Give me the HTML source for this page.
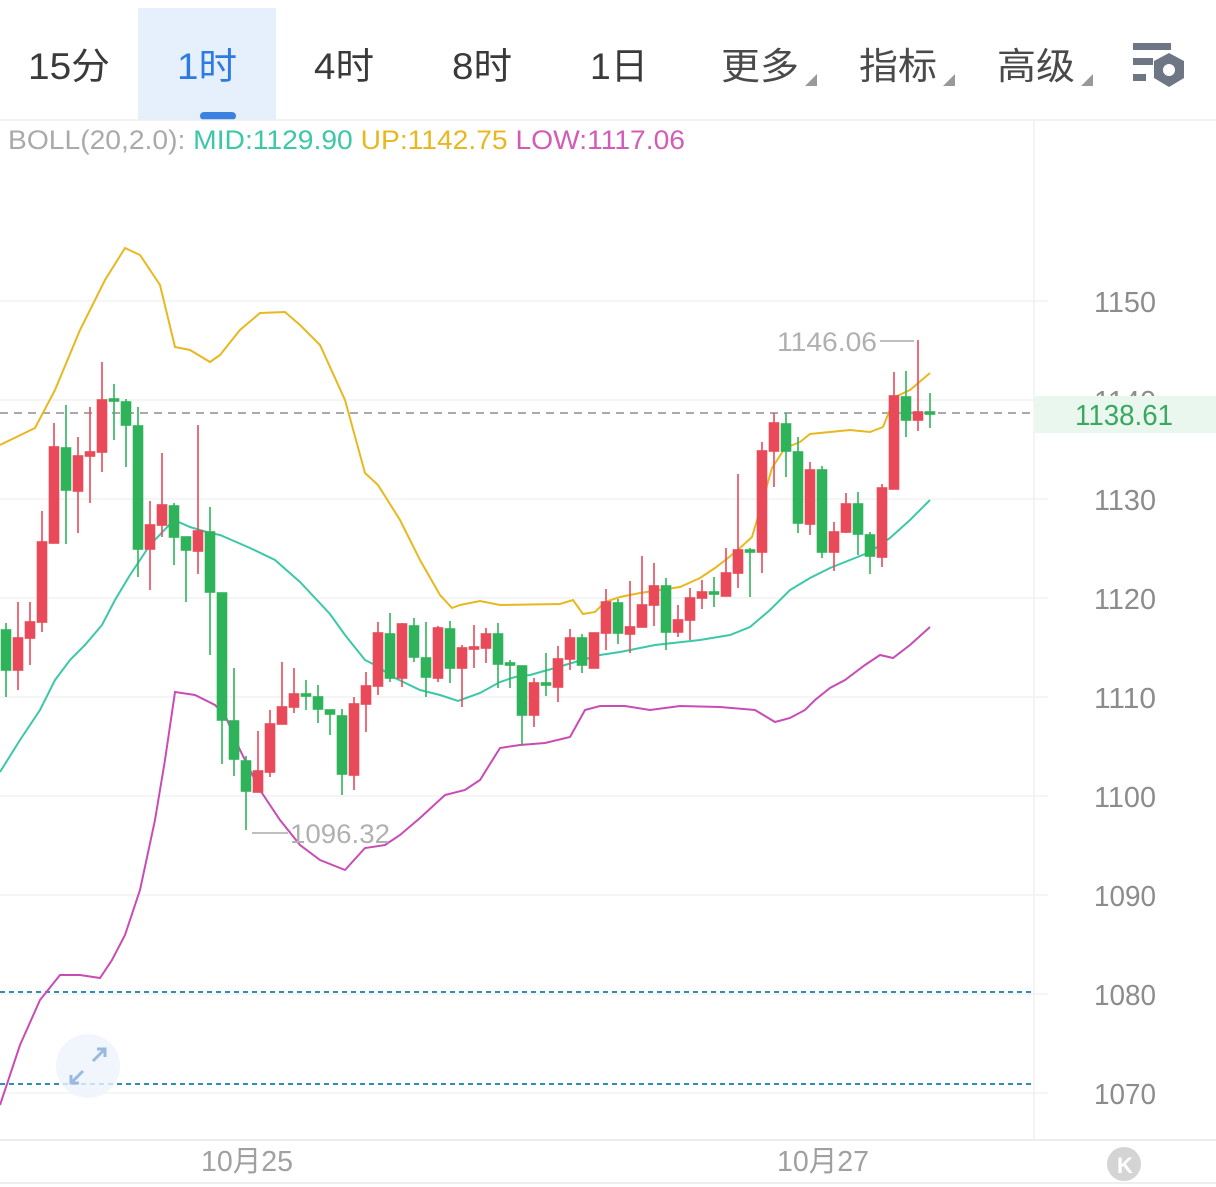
<!DOCTYPE html>
<html><head><meta charset="utf-8"><style>
html,body{margin:0;padding:0;background:#fff;width:1216px;height:1187px;overflow:hidden}
svg{display:block}
text{font-family:"Liberation Sans","Noto Sans CJK SC",sans-serif}
</style></head><body>
<svg width="1216" height="1187" viewBox="0 0 1216 1187" xmlns="http://www.w3.org/2000/svg">
<rect width="1216" height="1187" fill="#fff"/>
<rect x="138" y="8" width="138" height="112" fill="#e6f0fc"/>
<rect x="200" y="112" width="36" height="8" rx="4" fill="#3b82e0"/>
<g font-size="37" fill="#3a3a3a">
<text x="28" y="79" textLength="82" lengthAdjust="spacingAndGlyphs">15分</text>
<text x="177" y="79" textLength="60" lengthAdjust="spacingAndGlyphs" fill="#2d7be0">1时</text>
<text x="314" y="79" textLength="60" lengthAdjust="spacingAndGlyphs">4时</text>
<text x="452" y="79" textLength="60" lengthAdjust="spacingAndGlyphs">8时</text>
<text x="590" y="79" textLength="58" lengthAdjust="spacingAndGlyphs">1日</text>
<text x="721" y="79" textLength="78" lengthAdjust="spacingAndGlyphs" fill="#4a4a4a">更多</text>
<text x="859" y="79" textLength="78" lengthAdjust="spacingAndGlyphs" fill="#4a4a4a">指标</text>
<text x="997" y="79" textLength="78" lengthAdjust="spacingAndGlyphs" fill="#4a4a4a">高级</text>
</g>
<g fill="#999">
<polygon points="817,74 817,86 805,86"/>
<polygon points="955,74 955,86 943,86"/>
<polygon points="1093,74 1093,86 1081,86"/>
</g>
<g fill="#6e7585">
<rect x="1133" y="43" width="38" height="7"/>
<rect x="1133" y="58" width="20" height="7"/>
<rect x="1133" y="74" width="13" height="7"/>
<polygon points="1169,53 1184,61 1184,78 1169,87 1154,78 1154,61"/>
</g>
<circle cx="1169" cy="70" r="6" fill="#fff"/>
<line x1="0" y1="120" x2="1216" y2="120" stroke="#eee" stroke-width="1.5"/>
<line x1="1034" y1="120" x2="1034" y2="1140" stroke="#f0f0f0" stroke-width="1.5"/>
<text x="8" y="149" font-size="27" textLength="677" lengthAdjust="spacingAndGlyphs"><tspan fill="#aaa">BOLL(20,2.0): </tspan><tspan fill="#3cc8a8">MID:1129.90 </tspan><tspan fill="#e8b820">UP:1142.75 </tspan><tspan fill="#d35cb8">LOW:1117.06</tspan></text>
<g stroke="#f2f2f2" stroke-width="1.5">
<line x1="0" y1="301" x2="1048" y2="301"/><line x1="0" y1="400" x2="1048" y2="400"/>
<line x1="0" y1="499" x2="1048" y2="499"/><line x1="0" y1="598" x2="1048" y2="598"/>
<line x1="0" y1="697" x2="1048" y2="697"/><line x1="0" y1="796" x2="1048" y2="796"/>
<line x1="0" y1="895" x2="1048" y2="895"/><line x1="0" y1="994" x2="1048" y2="994"/>
<line x1="0" y1="1093" x2="1048" y2="1093"/>
</g>
<line x1="0" y1="1140" x2="1216" y2="1140" stroke="#eee" stroke-width="2"/>
<line x1="0" y1="1183" x2="1216" y2="1183" stroke="#eee" stroke-width="2"/>
<g font-size="29" fill="#8c8c8c">
<text x="1094" y="312" textLength="62" lengthAdjust="spacingAndGlyphs">1150</text>
<text x="1094" y="411" textLength="62" lengthAdjust="spacingAndGlyphs">1140</text>
<text x="1094" y="510" textLength="62" lengthAdjust="spacingAndGlyphs">1130</text>
<text x="1094" y="609" textLength="62" lengthAdjust="spacingAndGlyphs">1120</text>
<text x="1094" y="708" textLength="62" lengthAdjust="spacingAndGlyphs">1110</text>
<text x="1094" y="807" textLength="62" lengthAdjust="spacingAndGlyphs">1100</text>
<text x="1094" y="906" textLength="62" lengthAdjust="spacingAndGlyphs">1090</text>
<text x="1094" y="1005" textLength="62" lengthAdjust="spacingAndGlyphs">1080</text>
<text x="1094" y="1104" textLength="62" lengthAdjust="spacingAndGlyphs">1070</text>
<text x="201" y="1171" textLength="92" lengthAdjust="spacingAndGlyphs" fill="#a0a0a0">10月25</text>
<text x="777" y="1171" textLength="92" lengthAdjust="spacingAndGlyphs" fill="#a0a0a0">10月27</text>
</g>
<rect x="1035" y="396" width="181" height="37" fill="#eaf7ee"/>
<text x="1075" y="425" font-size="29" fill="#3aa862" textLength="98" lengthAdjust="spacingAndGlyphs">1138.61</text>
<circle cx="1124" cy="1164" r="17" fill="#d4d4d4"/>
<text x="1117" y="1173" font-size="22" fill="#fff" font-weight="bold">K</text>
<line x1="0" y1="413" x2="1030" y2="413" stroke="#aaa" stroke-width="2" stroke-dasharray="8,6"/>
<line x1="0" y1="992" x2="1034" y2="992" stroke="#2b8fb8" stroke-width="2" stroke-dasharray="5,4"/>
<line x1="0" y1="1084" x2="1034" y2="1084" stroke="#2b8fb8" stroke-width="2" stroke-dasharray="5,4"/>
<circle cx="88" cy="1066" r="32" fill="#eef4fc" opacity="0.8"/>
<g stroke="#9ab8e0" stroke-width="3" fill="none">
<path d="M93 1061 L105 1049 M97 1049 L105 1049 L105 1057"/>
<path d="M83 1071 L71 1083 M71 1075 L71 1083 L79 1083"/>
</g>
<g fill="none" stroke-width="2">
<polyline stroke="#e8b820" points="0,445 35,428 55,390 80,330 105,280 125,248 140,255 160,285 175,347 190,350 210,362 220,355 240,330 260,313 285,312 300,325 320,345 345,400 365,473 378,485 400,520 420,560 440,595 452,608 460,605 480,601 500,605 560,604 573,600 583,614 595,612 605,602 620,597 640,593 660,590 680,587 700,578 715,568 728,558 740,548 752,537 760,510 772,468 785,448 800,442 810,434 830,432 850,430 870,432 883,427 895,397 910,390 930,373"/>
<polyline stroke="#3cc8a8" points="0,772 20,740 40,710 55,680 70,660 85,645 102,625 115,600 130,575 150,545 174,520 190,527 210,533 220,535 250,548 275,560 300,582 330,614 345,635 365,660 375,665 395,678 420,690 440,695 458,701 480,693 500,682 515,677 530,675 555,668 575,662 600,655 620,652 640,648 655,645 700,640 730,635 750,627 770,610 790,590 810,578 830,568 850,560 870,552 890,538 910,520 930,500"/>
<polyline stroke="#c84cb4" points="0,1105 20,1045 40,1000 60,975 80,975 100,978 112,960 125,935 140,890 155,820 165,760 175,692 195,695 215,705 225,715 240,750 260,790 280,820 300,845 320,860 345,870 365,848 385,845 400,835 420,818 445,795 465,790 480,780 500,748 520,745 545,743 570,737 585,710 600,706 625,706 650,710 680,706 720,707 755,710 775,722 790,718 805,710 815,700 830,688 845,680 865,665 880,655 893,658 910,645 930,627"/>
</g>
<g stroke="#e84a5a" fill="#e84a5a" stroke-width="1.6">
<line x1="18" y1="602" x2="18" y2="690"/><rect x="13.5" y="638" width="9" height="32"/>
<line x1="30" y1="602" x2="30" y2="665"/><rect x="25.5" y="622" width="9" height="16"/>
<line x1="42" y1="511" x2="42" y2="632"/><rect x="37.5" y="542" width="9" height="80"/>
<line x1="54" y1="423" x2="54" y2="543"/><rect x="49.5" y="447" width="9" height="96"/>
<line x1="78" y1="437" x2="78" y2="533"/><rect x="73.5" y="456" width="9" height="35"/>
<line x1="90" y1="407" x2="90" y2="503"/><rect x="85.5" y="452" width="9" height="4"/>
<line x1="102" y1="362" x2="102" y2="472"/><rect x="97.5" y="400" width="9" height="52"/>
<line x1="150" y1="501" x2="150" y2="590"/><rect x="145.5" y="525" width="9" height="24"/>
<line x1="162" y1="453" x2="162" y2="537"/><rect x="157.5" y="505" width="9" height="20"/>
<line x1="198" y1="425" x2="198" y2="574"/><rect x="193.5" y="531" width="9" height="20"/>
<line x1="258" y1="731" x2="258" y2="792"/><rect x="253.5" y="771" width="9" height="21"/>
<line x1="270" y1="710" x2="270" y2="777"/><rect x="265.5" y="724" width="9" height="48"/>
<line x1="282" y1="662" x2="282" y2="724"/><rect x="277.5" y="707" width="9" height="17"/>
<line x1="294" y1="668" x2="294" y2="713"/><rect x="289.5" y="694" width="9" height="13"/>
<line x1="354" y1="697" x2="354" y2="790"/><rect x="349.5" y="704" width="9" height="71"/>
<line x1="366" y1="672" x2="366" y2="732"/><rect x="361.5" y="686" width="9" height="18"/>
<line x1="378" y1="622" x2="378" y2="695"/><rect x="373.5" y="633" width="9" height="53"/>
<line x1="402" y1="623" x2="402" y2="687"/><rect x="397.5" y="624" width="9" height="54"/>
<line x1="438" y1="626" x2="438" y2="682"/><rect x="433.5" y="628" width="9" height="50"/>
<line x1="462" y1="645" x2="462" y2="707"/><rect x="457.5" y="648" width="9" height="20"/>
<line x1="474" y1="625" x2="474" y2="668"/><rect x="469.5" y="647" width="9" height="2"/>
<line x1="486" y1="628" x2="486" y2="663"/><rect x="481.5" y="634" width="9" height="14"/>
<line x1="534" y1="678" x2="534" y2="727"/><rect x="529.5" y="683" width="9" height="32"/>
<line x1="558" y1="646" x2="558" y2="702"/><rect x="553.5" y="659" width="9" height="28"/>
<line x1="570" y1="629" x2="570" y2="670"/><rect x="565.5" y="638" width="9" height="21"/>
<line x1="594" y1="633" x2="594" y2="668"/><rect x="589.5" y="633" width="9" height="35"/>
<line x1="606" y1="589" x2="606" y2="650"/><rect x="601.5" y="602" width="9" height="31"/>
<line x1="630" y1="581" x2="630" y2="653"/><rect x="625.5" y="627" width="9" height="7"/>
<line x1="642" y1="556" x2="642" y2="627"/><rect x="637.5" y="605" width="9" height="22"/>
<line x1="654" y1="563" x2="654" y2="626"/><rect x="649.5" y="586" width="9" height="19"/>
<line x1="678" y1="605" x2="678" y2="637"/><rect x="673.5" y="620" width="9" height="12"/>
<line x1="690" y1="588" x2="690" y2="640"/><rect x="685.5" y="598" width="9" height="22"/>
<line x1="702" y1="580" x2="702" y2="609"/><rect x="697.5" y="592" width="9" height="6"/>
<line x1="726" y1="548" x2="726" y2="596"/><rect x="721.5" y="573" width="9" height="23"/>
<line x1="738" y1="474" x2="738" y2="588"/><rect x="733.5" y="550" width="9" height="23"/>
<line x1="762" y1="442" x2="762" y2="573"/><rect x="757.5" y="451" width="9" height="101"/>
<line x1="774" y1="413" x2="774" y2="487"/><rect x="769.5" y="423" width="9" height="28"/>
<line x1="810" y1="462" x2="810" y2="535"/><rect x="805.5" y="470" width="9" height="54"/>
<line x1="834" y1="522" x2="834" y2="571"/><rect x="829.5" y="532" width="9" height="20"/>
<line x1="846" y1="493" x2="846" y2="533"/><rect x="841.5" y="504" width="9" height="28"/>
<line x1="882" y1="484" x2="882" y2="567"/><rect x="877.5" y="488" width="9" height="69"/>
<line x1="894" y1="372" x2="894" y2="489"/><rect x="889.5" y="396" width="9" height="93"/>
<line x1="918" y1="340" x2="918" y2="431"/><rect x="913.5" y="412" width="9" height="8"/>
</g>
<g stroke="#2fb35a" fill="#2fb35a" stroke-width="1.6">
<line x1="6" y1="623" x2="6" y2="697"/><rect x="1.5" y="630" width="9" height="40"/>
<line x1="66" y1="405" x2="66" y2="544"/><rect x="61.5" y="448" width="9" height="42"/>
<line x1="114" y1="384" x2="114" y2="440"/><rect x="109.5" y="399" width="9" height="2"/>
<line x1="126" y1="399" x2="126" y2="467"/><rect x="121.5" y="402" width="9" height="23"/>
<line x1="138" y1="407" x2="138" y2="577"/><rect x="133.5" y="426" width="9" height="123"/>
<line x1="174" y1="503" x2="174" y2="565"/><rect x="169.5" y="506" width="9" height="31"/>
<line x1="186" y1="537" x2="186" y2="602"/><rect x="181.5" y="537" width="9" height="13"/>
<line x1="210" y1="507" x2="210" y2="655"/><rect x="205.5" y="532" width="9" height="60"/>
<line x1="222" y1="593" x2="222" y2="764"/><rect x="217.5" y="593" width="9" height="127"/>
<line x1="234" y1="668" x2="234" y2="776"/><rect x="229.5" y="721" width="9" height="38"/>
<line x1="246" y1="756" x2="246" y2="830"/><rect x="241.5" y="761" width="9" height="30"/>
<line x1="306" y1="680" x2="306" y2="710"/><rect x="301.5" y="694" width="9" height="2"/>
<line x1="318" y1="685" x2="318" y2="723"/><rect x="313.5" y="697" width="9" height="12"/>
<line x1="330" y1="710" x2="330" y2="735"/><rect x="325.5" y="710" width="9" height="4"/>
<line x1="342" y1="709" x2="342" y2="795"/><rect x="337.5" y="716" width="9" height="58"/>
<line x1="390" y1="613" x2="390" y2="682"/><rect x="385.5" y="634" width="9" height="44"/>
<line x1="414" y1="618" x2="414" y2="662"/><rect x="409.5" y="626" width="9" height="31"/>
<line x1="426" y1="622" x2="426" y2="697"/><rect x="421.5" y="658" width="9" height="19"/>
<line x1="450" y1="621" x2="450" y2="683"/><rect x="445.5" y="629" width="9" height="39"/>
<line x1="498" y1="623" x2="498" y2="688"/><rect x="493.5" y="634" width="9" height="30"/>
<line x1="510" y1="660" x2="510" y2="688"/><rect x="505.5" y="663" width="9" height="2"/>
<line x1="522" y1="666" x2="522" y2="745"/><rect x="517.5" y="666" width="9" height="49"/>
<line x1="546" y1="653" x2="546" y2="696"/><rect x="541.5" y="683" width="9" height="2"/>
<line x1="582" y1="634" x2="582" y2="673"/><rect x="577.5" y="638" width="9" height="27"/>
<line x1="618" y1="599" x2="618" y2="644"/><rect x="613.5" y="603" width="9" height="30"/>
<line x1="666" y1="578" x2="666" y2="650"/><rect x="661.5" y="586" width="9" height="46"/>
<line x1="714" y1="577" x2="714" y2="607"/><rect x="709.5" y="592" width="9" height="2"/>
<line x1="750" y1="548" x2="750" y2="597"/><rect x="745.5" y="550" width="9" height="2"/>
<line x1="786" y1="413" x2="786" y2="477"/><rect x="781.5" y="424" width="9" height="27"/>
<line x1="798" y1="437" x2="798" y2="533"/><rect x="793.5" y="452" width="9" height="71"/>
<line x1="822" y1="466" x2="822" y2="558"/><rect x="817.5" y="470" width="9" height="82"/>
<line x1="858" y1="492" x2="858" y2="555"/><rect x="853.5" y="504" width="9" height="30"/>
<line x1="870" y1="532" x2="870" y2="574"/><rect x="865.5" y="535" width="9" height="21"/>
<line x1="906" y1="371" x2="906" y2="437"/><rect x="901.5" y="397" width="9" height="23"/>
<line x1="930" y1="393" x2="930" y2="428"/><rect x="925.5" y="412" width="9" height="2"/>
</g>
<text x="777" y="351" font-size="27" fill="#b0b0b0" textLength="100" lengthAdjust="spacingAndGlyphs">1146.06</text>
<line x1="880" y1="341" x2="914" y2="341" stroke="#aaa" stroke-width="1.5"/>
<line x1="252" y1="833" x2="288" y2="833" stroke="#aaa" stroke-width="1.5"/>
<text x="290" y="843" font-size="27" fill="#b0b0b0" textLength="100" lengthAdjust="spacingAndGlyphs">1096.32</text>
</svg>
</body></html>
